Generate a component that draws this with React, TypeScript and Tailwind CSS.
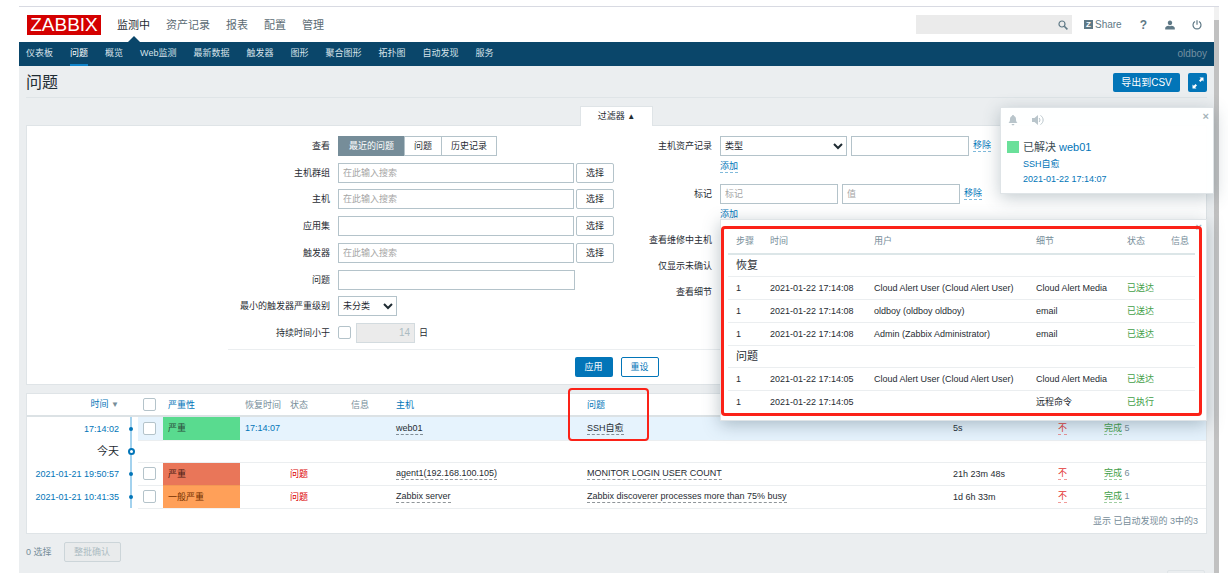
import React, { useState } from 'react';

const navItems = ['监测中', '资产记录', '报表', '配置', '管理'];

const subNavItems = [
  '仪表板', '问题', '概览', 'Web监测', '最新数据', '触发器', '图形', '聚合图形', '拓扑图', '自动发现', '服务',
];

const problems = [
  {
    time: '17:14:02', severity: '严重', color: 'bg-[#59db8f] text-[#2a4d3b]', recovery: '17:14:07', status: '',
    host: 'web01', name: 'SSH自愈', duration: '5s', actions: 5, selected: true,
  },
  {
    time: '2021-01-21 19:50:57', severity: '严重', color: 'bg-[#e97659] text-[#4b2015]', recovery: '', status: '问题',
    host: 'agent1(192.168.100.105)', name: 'MONITOR LOGIN USER COUNT', duration: '21h 23m 48s', actions: 6, selected: false,
  },
  {
    time: '2021-01-21 10:41:35', severity: '一般严重', color: 'bg-[#ffa059] text-[#733100]', recovery: '', status: '问题',
    host: 'Zabbix server', name: 'Zabbix discoverer processes more than 75% busy', duration: '1d 6h 33m', actions: 1, selected: false,
  },
];

const actionGroups = [
  {
    title: '恢复',
    rows: [
      ['1', '2021-01-22 17:14:08', 'Cloud Alert User (Cloud Alert User)', 'Cloud Alert Media', '已送达'],
      ['1', '2021-01-22 17:14:08', 'oldboy (oldboy oldboy)', 'email', '已送达'],
      ['1', '2021-01-22 17:14:08', 'Admin (Zabbix Administrator)', 'email', '已送达'],
    ],
  },
  {
    title: '问题',
    rows: [
      ['1', '2021-01-22 17:14:05', 'Cloud Alert User (Cloud Alert User)', 'Cloud Alert Media', '已送达'],
      ['1', '2021-01-22 17:14:05', '', '远程命令', '已执行'],
    ],
  },
];

const inputClass = 'h-5 border border-[#b4c3ca] bg-white px-1 placeholder:text-[#a5a5a5] outline-none focus:border-[#0275b8]';
const checkboxClass = 'block size-[13px] shrink-0 appearance-none rounded-xs border border-[#b4c3ca] bg-white checked:bg-[#0275b8]';

const DashedLink = ({ children, className = 'text-[#0275b8]' }: { children: React.ReactNode; className?: string }) => (
  <a href="#" className={`inline-block border-b border-dashed border-current/50 leading-[11px] ${className}`}>{children}</a>
);

const Field = ({ label, id, children }: { label: string; id: string; children: React.ReactNode }) => (
  <div className="flex h-5 items-center">
    <label htmlFor={id} className="mr-2 w-[102px] shrink-0 whitespace-nowrap text-right">{label}</label>
    {children}
  </div>
);

const SelectField = ({ label, id, placeholder }: { label: string; id: string; placeholder?: string }) => (
  <Field label={label} id={id}>
    <input id={id} type="text" placeholder={placeholder} className={`${inputClass} w-[237px]`} />
    <button type="button" className="ml-0.5 h-5 w-[38px] rounded-xs border border-[#b4c3ca] bg-white">选择</button>
  </Field>
);

const Header = () => (
  <header>
    <div className="flex h-[35px] items-center bg-white pl-2 pr-3">
      <a href="#" className="flex h-5 w-[74px] items-center justify-center bg-[#d40000] text-[19px] leading-5 text-white">ZABBIX</a>
      <nav className="ml-4 flex h-full gap-4 text-[11px] text-[#5c6c74]" aria-label="主菜单">
        {navItems.map((item, i) => (
          <a key={item} href="#" className={`relative flex items-center ${i === 0 ? 'text-[#1f2c33]' : ''}`}>
            {item}
            {i === 0 && (
              <span className="absolute bottom-0 left-1/2 -translate-x-1/2 border-x-6 border-b-6 border-x-transparent border-b-[#0a466a]" />
            )}
          </a>
        ))}
      </nav>
      <div className="ml-auto flex items-center text-[#5f7986]">
        <div className="flex h-[19px] w-[156px] items-center bg-[#ebebeb] pr-1">
          <input type="text" aria-label="搜索" className="h-full min-w-0 flex-1 px-1 outline-none" />
          <button type="button" aria-label="搜索">
            <svg viewBox="0 0 10 10" className="size-[10px]" fill="none" stroke="currentColor">
              <circle cx="4" cy="4" r="3" strokeWidth="1.2" />
              <path d="M6.3 6.3 9.4 9.4" strokeWidth="1.6" />
            </svg>
          </button>
        </div>
        <a href="#" className="ml-3 flex items-center gap-0.5 text-[10px]">
          <span className="flex size-[9px] items-center justify-center bg-[#5f7986] text-[8px] font-bold leading-none text-white">Z</span>
          Share
        </a>
        <a href="#" className="ml-[18px] text-[12px] font-bold leading-none" aria-label="帮助">?</a>
        <a href="#" className="ml-[18px]" aria-label="用户资料">
          <svg viewBox="0 0 10 10" className="size-[10px]" fill="currentColor">
            <path d="M5 0.5c1.4 0 2.2 1 2.2 2.3S6.300 5.300 5 5.300 2.800 4.100 2.800 2.800 3.600 0.500 5 0.500zM0.200 9.500V8c0-1.100 1.700-1.800 3.300-2.200.9.500 2.100.5 3 0C8.100 6.200 9.800 6.900 9.800 8v1.500z" />
          </svg>
        </a>
        <a href="#" className="ml-[17px]" aria-label="退出">
          <svg viewBox="0 0 10 10" className="size-[10px]" fill="none" stroke="currentColor" strokeWidth="1.200">
            <path d="M3 1.500A4 4 0 1 0 7 1.500M5 0.200V4.800" />
          </svg>
        </a>
      </div>
    </div>
    <nav className="flex h-6 items-center gap-[17px] bg-[#0a466a] px-[7px] text-[#d6e2e9]" aria-label="子菜单">
      {subNavItems.map((item) => (
        <a
          key={item}
          href="#"
          className={`flex h-full items-center border-b-2 whitespace-nowrap ${item === '问题' ? 'border-[#0f83c9] text-white' : 'border-transparent'}`}
        >
          {item}
        </a>
      ))}
      <span className="ml-auto text-[10px] text-[#7290a1]">oldboy</span>
    </nav>
  </header>
);

const Filter = () => {
  const [view, setView] = useState('最近的问题');

  return (
    <form className="border border-[#dfe4e7] bg-white pb-[7px] pt-2.5" onSubmit={(e) => e.preventDefault()}>
      <div className="mx-auto max-w-[777px]">
        <div className="flex border-b border-[#ebeef0] pb-1.5">
          <div className="flex min-h-[207px] w-[386px] flex-col justify-between">
            <fieldset className="flex h-5 items-center">
              <legend className="float-left mr-2 w-[102px] text-right">查看</legend>
              {['最近的问题', '问题', '历史记录'].map((option) => (
                <label key={option} className="relative -mr-px">
                  <input
                    type="radio"
                    name="view"
                    checked={view === option}
                    onChange={() => setView(option)}
                    className="peer sr-only"
                  />
                  <span className="flex h-5 items-center border border-[#b4c3ca] px-[9px] peer-checked:border-[#768d99] peer-checked:bg-[#768d99] peer-checked:px-2.5 peer-checked:text-white">
                    {option}
                  </span>
                </label>
              ))}
            </fieldset>
            <SelectField label="主机群组" id="groups" placeholder="在此输入搜索" />
            <SelectField label="主机" id="hosts" placeholder="在此输入搜索" />
            <SelectField label="应用集" id="application" />
            <SelectField label="触发器" id="triggers" placeholder="在此输入搜索" />
            <Field label="问题" id="problem">
              <input id="problem" type="text" className={`${inputClass} w-[237px]`} />
            </Field>
            <Field label="最小的触发器严重级别" id="severity">
              <select id="severity" className="h-5 w-[59px] border border-[#b4c3ca] bg-white">
                <option>未分类</option>
              </select>
            </Field>
            <Field label="持续时间小于" id="age">
              <input id="age" type="checkbox" className={checkboxClass} />
              <input
                type="text"
                aria-label="天数"
                defaultValue="14"
                disabled
                className="ml-[5px] mr-1 h-5 w-[59px] border border-[#d3dbdf] bg-[#ebebeb] px-1 text-right text-[10px] text-[#acbbc2]"
              />
              日
            </Field>
          </div>

          <div className="flex-1">
            <div className="flex h-5 items-center">
              <label htmlFor="inventory" className="mr-2 w-[98px] text-right">主机资产记录</label>
              <select id="inventory" className="h-5 w-[127px] border border-[#b4c3ca] bg-white">
                <option>类型</option>
              </select>
              <input type="text" aria-label="资产值" className={`${inputClass} mx-1 w-[118px]`} />
              <DashedLink>移除</DashedLink>
            </div>
            <div className="ml-[106px] mt-1 h-6"><DashedLink>添加</DashedLink></div>
            <div className="flex h-5 items-center">
              <label htmlFor="tag" className="mr-2 w-[98px] text-right">标记</label>
              <input id="tag" type="text" placeholder="标记" className={`${inputClass} w-[118px]`} />
              <input type="text" aria-label="值" placeholder="值" className={`${inputClass} mx-1 w-[118px]`} />
              <DashedLink>移除</DashedLink>
            </div>
            <div className="ml-[106px] mt-1 h-[22px]"><DashedLink>添加</DashedLink></div>
            <div className="flex flex-col gap-1.5">
              {['查看维修中主机', '仅显示未确认', '查看细节'].map((label) => (
                <div key={label} className="flex h-5 items-center">
                  <label htmlFor={label} className="mr-2 w-[98px] text-right">{label}</label>
                  <input id={label} type="checkbox" className={checkboxClass} />
                </div>
              ))}
            </div>
          </div>
        </div>
        <div className="mt-[7px] flex justify-center gap-2">
          <button type="submit" className="h-5 w-[38px] rounded-xs bg-[#0275b8] text-white">应用</button>
          <button type="reset" className="h-5 w-[38px] rounded-xs border border-[#0275b8] bg-white text-[#0275b8]">重设</button>
        </div>
      </div>
    </form>
  );
};

const TimelineCell = ({ day = false }: { day?: boolean }) => (
  <td className="bg-white p-0">
    <div className={`mx-auto flex w-0.5 items-center justify-center bg-[#a3d2ee] ${day ? 'h-[22px]' : 'h-[23px]'}`}>
      <span className={day ? 'size-[7px] shrink-0 rounded-full border-2 border-[#0275b8] bg-white' : 'size-1 shrink-0 rounded-full bg-[#0275b8]'} />
    </div>
  </td>
);

const ProblemsTable = () => (
  <div className="mt-2 border border-[#dfe4e7] bg-white">
    <table className="w-full table-fixed border-collapse text-left">
      <colgroup>
        <col className="w-[97px]" />
        <col className="w-3.5" />
        <col className="w-[25px]" />
        <col className="w-[77px]" />
        <col className="w-[45px]" />
        <col className="w-[61px]" />
        <col className="w-[45px]" />
        <col className="w-[191px]" />
        <col />
        <col className="w-[105px]" />
        <col className="w-[46px]" />
        <col className="w-[107px]" />
      </colgroup>
      <thead>
        <tr className="h-[22px] border-b-2 border-[#dce2e5] text-[#768d99] *:px-[5px] *:py-0 *:font-normal">
          <th className="text-right whitespace-nowrap">
            <a href="#" className="text-[#0275b8]">时间</a> <span className="text-[8px]">▼</span>
          </th>
          <th />
          <th><input type="checkbox" aria-label="全选" className={checkboxClass} /></th>
          <th><a href="#" className="text-[#0275b8]">严重性</a></th>
          <th className="whitespace-nowrap">恢复时间</th>
          <th>状态</th>
          <th>信息</th>
          <th><a href="#" className="text-[#0275b8]">主机</a></th>
          <th><a href="#" className="text-[#0275b8]">问题</a></th>
          <th aria-label="持续时间" />
          <th aria-label="确认" />
          <th aria-label="动作" />
        </tr>
      </thead>
      <tbody>
        {problems.map((p, i) => (
          <React.Fragment key={p.time}>
            {i === 1 && (
              <tr className="h-[22px]">
                <td className="px-[5px] py-0 text-right text-[11px]">今天</td>
                <TimelineCell day />
                <td colSpan={10} className="border-b border-[#ebeef0] p-0" />
              </tr>
            )}
            <tr className={`h-[23px] *:px-[5px] *:py-0 ${p.selected ? 'bg-[#e6f3fd]' : ''}`}>
              <td className="bg-white text-right whitespace-nowrap"><a href="#" className="text-[#0275b8]">{p.time}</a></td>
              <TimelineCell />
              <td className="border-b border-[#ebeef0]"><input type="checkbox" aria-label={p.name} className={checkboxClass} /></td>
              <td className={`border-b border-black/5 ${p.color}`}>{p.severity}</td>
              <td className="border-b border-[#ebeef0]"><a href="#" className="text-[#0275b8]">{p.recovery}</a></td>
              <td className="border-b border-[#ebeef0] text-[#dc0000]">{p.status}</td>
              <td className="border-b border-[#ebeef0]" />
              <td className="border-b border-[#ebeef0] whitespace-nowrap"><DashedLink className="text-[#1f2c33]">{p.host}</DashedLink></td>
              <td className="border-b border-[#ebeef0] whitespace-nowrap"><DashedLink className="text-[#1f2c33]">{p.name}</DashedLink></td>
              <td className="border-b border-[#ebeef0]">{p.duration}</td>
              <td className="border-b border-[#ebeef0]"><DashedLink className="text-[#e33734]">不</DashedLink></td>
              <td className="border-b border-[#ebeef0] text-[#768d99]">
                <DashedLink className="text-[#429e47]">完成</DashedLink> {p.actions}
              </td>
            </tr>
          </React.Fragment>
        ))}
      </tbody>
    </table>
    <div className="flex h-6 items-center justify-end pr-2 text-[#768d99]">显示 已自动发现的 3中的3</div>
  </div>
);

const Notification = () => (
  <aside className="absolute right-3.5 top-[107px] h-[87px] w-[214px] border border-[#dfe4e7] bg-white/95 text-[#0275b8] shadow-[0_4px_16px_rgba(60,85,99,0.3)]">
    <div className="flex h-6 items-center gap-3.5 pl-[7px] text-[#b9c5cb]">
      <button type="button" aria-label="暂停">
        <svg viewBox="0 0 10 12" className="h-3 w-2.5" fill="currentColor">
          <path d="M5 1c.6 0 1 .4 1 1 1.500.5 2 1.700 2 3.200C8 7 8.300 7.800 9.500 9H.5C1.700 7.800 2 7 2 5.200 2 3.700 2.500 2.500 4 2c0-.6.400-1 1-1zM3.600 10h2.800c-.2 1-.8 1.400-1.400 1.400S3.800 11 3.600 10z" />
        </svg>
      </button>
      <button type="button" aria-label="静音">
        <svg viewBox="0 0 12 12" className="size-3" fill="currentColor">
          <path d="M0 4h2.500L6 1v10L2.500 8H0z" />
          <path d="M7.200 4q1.600 2 0 4M8.500 1.500c3.500 2 3.500 7 0 9" fill="none" stroke="currentColor" />
        </svg>
      </button>
    </div>
    <button type="button" aria-label="关闭" className="absolute right-1 top-0.5 text-[11px] font-bold leading-3 text-[#a5b3ba]">×</button>
    <div className="flex gap-1 pl-1.5 pt-1.5">
      <span className="mt-[3px] size-3 bg-[#6ae09a]" />
      <div>
        <h4 className="text-[11px] leading-[18px]"><span className="text-[#3c4b53]">已解决</span> <a href="#">web01</a></h4>
        <p className="leading-4"><a href="#">SSH自愈</a></p>
        <p className="leading-[15px]"><a href="#">2021-01-22 17:14:07</a></p>
      </div>
    </div>
  </aside>
);

const ActionsPopup = () => (
  <div className="absolute right-[21px] top-[219px] w-[487px] border border-[#dfe4e7] bg-white pb-1 pt-1.5 shadow-[0_4px_16px_rgba(60,85,99,0.35)]" role="dialog" aria-label="动作">
    <button type="button" aria-label="关闭" className="absolute right-1 top-px text-[11px] font-bold leading-3 text-[#a5b3ba]">×</button>
    <div className="relative mr-1 rounded-sm border-3 border-[#fb2218] px-1">
      <table className="w-full table-fixed border-collapse text-left">
        <colgroup>
          <col className="w-[34px]" />
          <col className="w-[104px]" />
          <col />
          <col className="w-[91px]" />
          <col className="w-11" />
          <col className="w-8" />
        </colgroup>
        <thead>
          <tr className="h-[25px] border-b-2 border-[#dce6e8] text-[#768d99] *:px-2 *:py-0 *:font-normal *:whitespace-nowrap">
            <th>步骤</th>
            <th>时间</th>
            <th>用户</th>
            <th>细节</th>
            <th>状态</th>
            <th>信息</th>
          </tr>
        </thead>
        <tbody>
          {actionGroups.map((group) => (
            <React.Fragment key={group.title}>
              <tr className="h-[22px] border-b border-[#ebeef0]">
                <th colSpan={6} className="px-2 py-0 text-[11px] font-normal">{group.title}</th>
              </tr>
              {group.rows.map((row, i) => (
                <tr key={i} className="h-[23px] border-b border-[#ebeef0] last:border-b-0">
                  {row.map((cell, j) => (
                    <td key={j} className={`px-2 py-0 whitespace-nowrap ${j === 4 ? 'text-[#429e47]' : ''}`}>{cell}</td>
                  ))}
                  <td />
                </tr>
              ))}
            </React.Fragment>
          ))}
        </tbody>
      </table>
    </div>
  </div>
);

const App: React.FC = () => {
  return (
    <div className="relative flex h-screen flex-col overflow-hidden bg-white pl-[19px] pr-[9px] pt-1.5 font-['Liberation_Sans','Noto_Sans_CJK_SC',sans-serif] text-[9px] leading-3 text-[#1f2c33]">
      <div className="flex min-h-0 flex-1 border-t border-[#d8dae2]">
        <div className="min-w-0 flex-1 bg-[#ebeef0]">
          <Header />
          <main className="px-[7px]">
            <div className="flex h-8 items-center gap-2 border-b border-[#dfe4e7] pt-0.5">
              <h1 className="mr-auto text-[16px] leading-5">问题</h1>
              <button type="button" className="h-[19px] w-[67px] rounded-xs bg-[#0275b8] text-[10px] text-white">导出到CSV</button>
              <button type="button" aria-label="全屏" className="flex size-[19px] items-center justify-center rounded-xs bg-[#0275b8] text-white">
                <svg viewBox="0 0 12 12" className="size-3" fill="currentColor">
                  <path d="M7.500 0.500h4v4L10.200 3.200 8.400 5 7 3.600l1.800-1.800zM0.500 7.500l1.300 1.300L3.600 7 5 8.400l-1.800 1.800 1.300 1.300h-4z" />
                </svg>
              </button>
            </div>
            <div className="mt-2 flex justify-center">
              <button type="button" className="relative -mb-px h-5 w-[73px] border border-b-0 border-[#dfe4e7] bg-white">
                过滤器 <span className="text-[8px]">▲</span>
              </button>
            </div>
            <Filter />
            <ProblemsTable />
            <div className="mt-2 flex items-center gap-3 text-[#768d99]">
              <span>0 选择</span>
              <button type="button" disabled className="h-5 w-[57px] rounded-xs border border-[#ccd5d9] bg-[#e9ebec] text-[#acbbc2]">整批确认</button>
            </div>
            <div className="mr-0.5 mt-2 flex justify-end">
              <button type="button" aria-label="调试" className="h-5 w-[38px] rounded-xs border border-[#dfe4e7]" />
            </div>
          </main>
        </div>
        <div className="w-[5px] bg-[#f1f1f1] pt-[13px]">
          <div className="h-full bg-[#c1c1c1]" />
        </div>
      </div>

      <ActionsPopup />
      <Notification />
      <div className="pointer-events-none absolute left-[568px] top-[388px] h-[53px] w-[81px] rounded-sm border-2 border-[#fb2218]" />
    </div>
  );
};

export default App;
